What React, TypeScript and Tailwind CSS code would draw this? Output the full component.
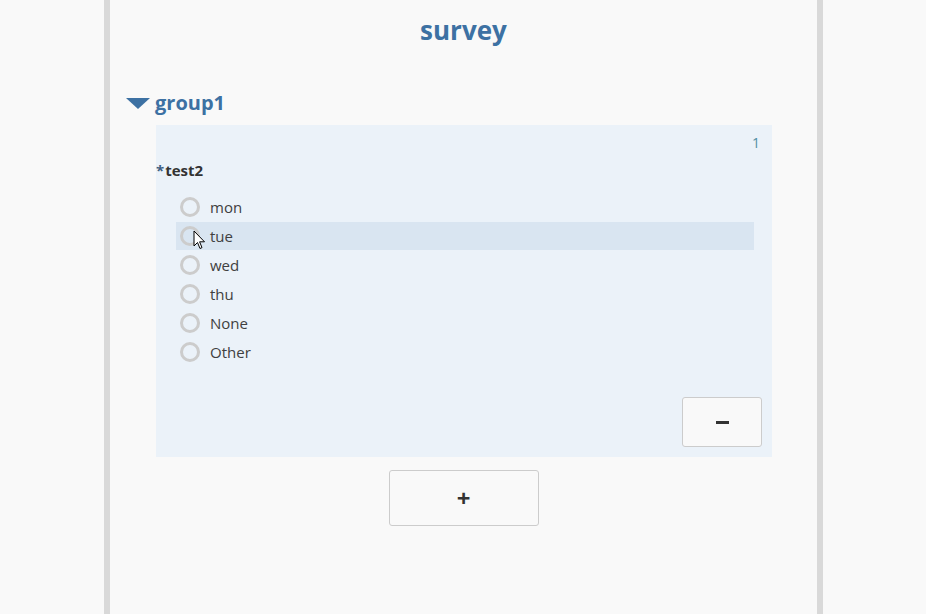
import React from "react";

const options = ["mon", "tue", "wed", "thu", "None", "Other"];

export default function App() {
  return (
    <div
      className="w-[926px] h-[614px] bg-[#f9f9f9] overflow-hidden flex"
      style={{ fontFamily: '"Open Sans", "Noto Sans", sans-serif' }}
    >
      <div className="ml-[104px] w-[719px] h-full border-x-[6px] border-[#d9d9d9] flex flex-col">
        <div className="pt-[12px] text-center text-[26px] leading-[36px] font-bold text-[#3d71a3]">
          survey
        </div>
        <div className="mt-[41px] flex items-center h-[28px]">
          <svg width="24" height="11" viewBox="0 0 24 11" className="ml-[16px]">
            <polygon points="0,0 24,0 12,11" fill="#3d71a3" />
          </svg>
          <span className="ml-[5px] text-[20px] font-bold text-[#3d71a3] leading-[28px]">group1</span>
        </div>
        <div className="mt-[8px] ml-[46px] w-[616px] bg-[#ebf2f9] flex flex-col pb-[10px]">
          <div className="pt-[8px] pr-[12px] text-right text-[14px] leading-[20px] text-[#4f8ea3]">1</div>
          <div className="mt-[7px] text-[15px] leading-[20px] font-bold text-[#333333]">
            <span className="mr-[1px] text-[#3f5f82]">*</span>test2
          </div>
          <div className="mt-[13px] ml-[20px] mr-[18px] flex flex-col gap-[1px]">
            {options.map((o) => (
              <div
                key={o}
                className={`relative h-[28px] flex items-center ${o === "tue" ? "bg-[#d9e5f1]" : ""}`}
              >
                <span className="ml-[4px] w-[20px] h-[20px] rounded-full border-[3px] border-[#cccccc] box-border" />
                <span className="ml-[10px] text-[15px] text-[#404040]">{o}</span>
                {o === "tue" && (
                  <svg
                    width="14"
                    height="21"
                    viewBox="0 0 14 21"
                    className="absolute left-[17px] top-[8px]"
                  >
                    <path
                      d="M1 1 L1 16 L4.5 12.5 L7 18.5 L9 17.6 L6.6 11.8 L11.5 11.8 Z"
                      fill="#ffffff"
                      stroke="#000000"
                      strokeWidth="1"
                      strokeLinejoin="round"
                    />
                  </svg>
                )}
              </div>
            ))}
          </div>
          <div className="mt-[31px] flex justify-end pr-[10px]">
            <button className="w-[80px] h-[50px] border border-[#cccccc] rounded-[3px] bg-[#f9f9f9] flex items-center justify-center">
              <span className="block w-[13px] h-[3px] bg-[#333333]" />
            </button>
          </div>
        </div>
        <div className="mt-[13px] flex justify-center">
          <button className="w-[150px] h-[56px] border border-[#cccccc] rounded-[3px] bg-[#f9f9f9] flex items-center justify-center text-[#333333] text-[24px] font-bold leading-none">
            +
          </button>
        </div>
      </div>
    </div>
  );
}
